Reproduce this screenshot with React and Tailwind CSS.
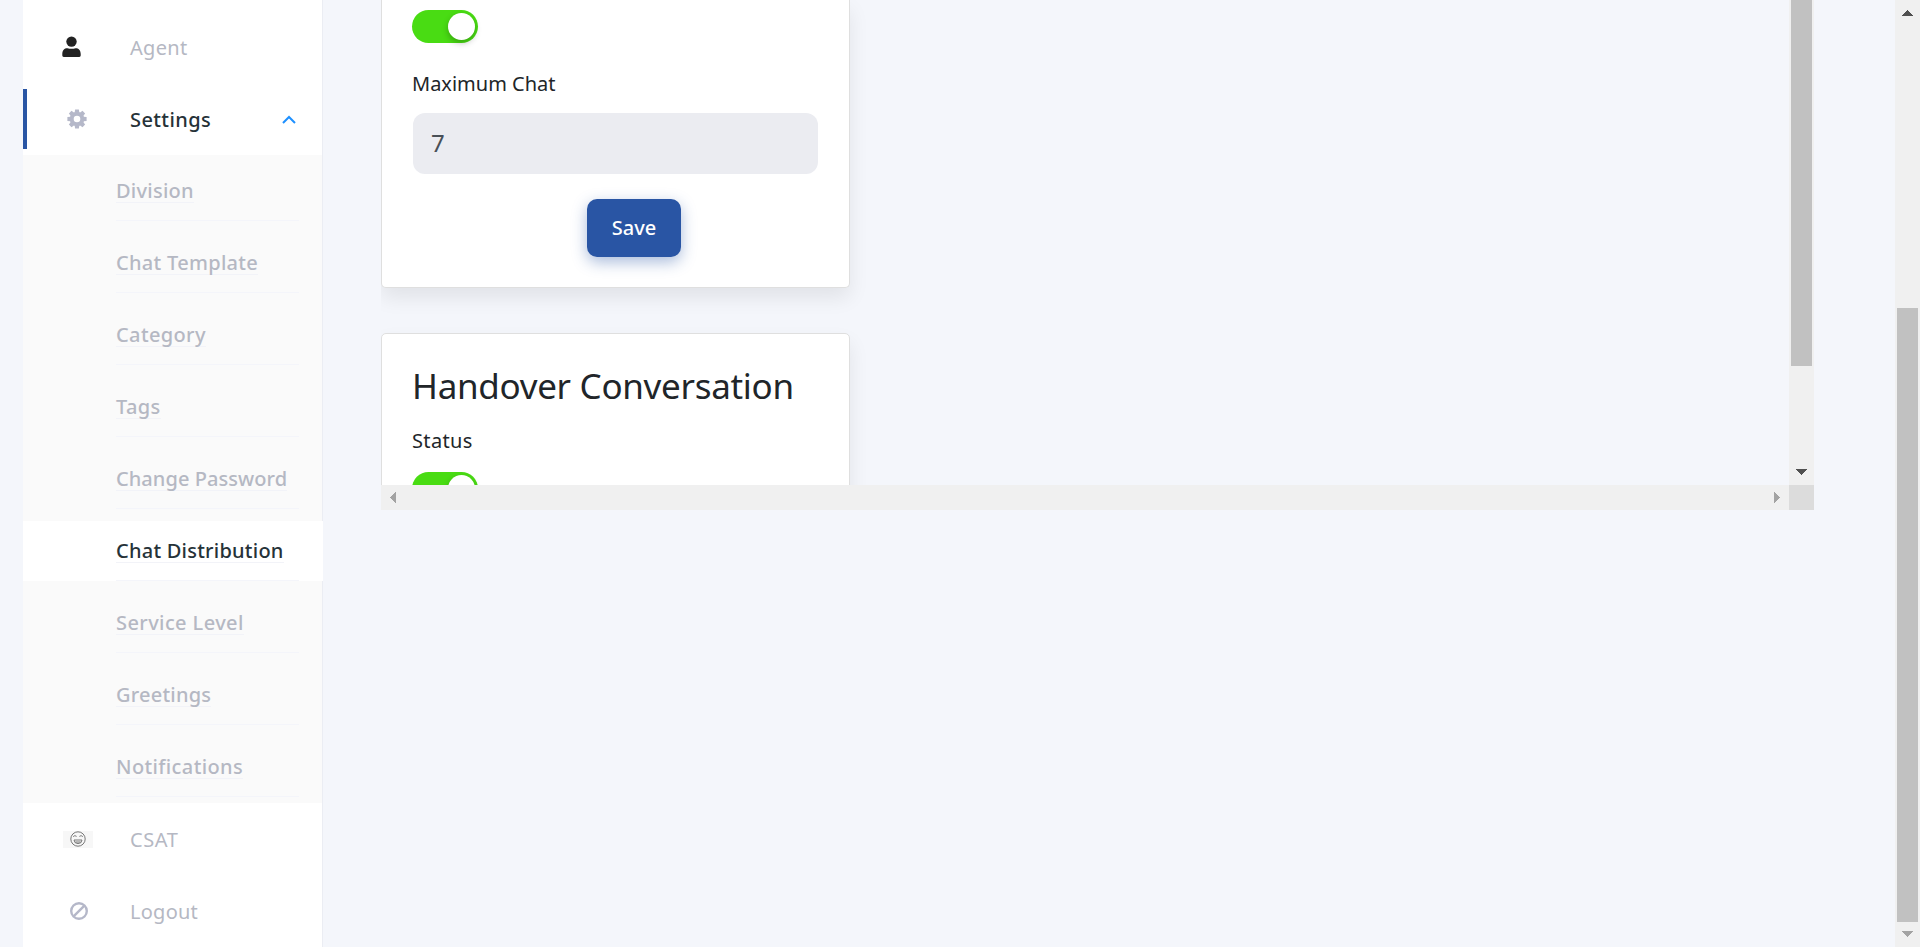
import React from "react";

const subItems = [
  { label: "Division", ls: "tracking-[0.25px]" },
  { label: "Chat Template", ls: "tracking-[0.3px]" },
  { label: "Category", ls: "tracking-[0.37px]" },
  { label: "Tags", ls: "tracking-[0.35px]" },
  { label: "Change Password", ls: "tracking-[0.06px]" },
  { label: "Chat Distribution", ls: "tracking-[0.24px]", active: true },
  { label: "Service Level", ls: "tracking-[0.4px]" },
  { label: "Greetings", ls: "tracking-[0.22px]" },
  { label: "Notifications", ls: "tracking-[0.38px]" },
];

function UserIcon() {
  return (
    <svg width="19" height="22" viewBox="0 0 19 22" fill="#222">
      <circle cx="9.5" cy="5.6" r="5.2" />
      <path d="M0.3 18C0.3 14 2.4 12.2 5.4 12.2Q9.5 13.4 13.6 12.2C16.6 12.2 18.7 14 18.7 18V19.6Q18.7 21 17.3 21H1.7Q0.3 21 0.3 19.6Z" />
    </svg>
  );
}

function GearIcon() {
  const teeth = [0, 45, 90, 135, 180, 225, 270, 315];
  return (
    <svg width="20" height="20" viewBox="-10 -10 20 20" fill="#b5b8c9">
      <circle r="5.3" fill="none" stroke="#b5b8c9" strokeWidth="4" />
      {teeth.map((a) => (
        <path key={a} d="M-2.3-6.4 -1.9-9.6H1.9L2.3-6.4Z" transform={`rotate(${a})`} />
      ))}
    </svg>
  );
}

function BanIcon() {
  return (
    <svg width="18" height="18" viewBox="0 0 18 18" fill="none" stroke="#b5b8c9" strokeWidth="2.4">
      <circle cx="9" cy="9" r="7.8" />
      <path d="M3.6 14.4 14.4 3.6" />
    </svg>
  );
}

function SmileIcon() {
  return (
    <svg width="16" height="16" viewBox="0 0 16 16" fill="none" stroke="#777" strokeWidth="1">
      <circle cx="8" cy="8" r="7.2" />
      <path d="M3.2 5.6Q4.8 3.8 6.6 5.4M9.4 5.4Q11.2 3.8 12.8 5.6" />
      <path d="M4 9H12Q11.8 12.6 8 12.6T4 9ZM5.4 11H10.6" />
    </svg>
  );
}

function Arrow({ dir, color }) {
  const shapes = {
    up: "M0 6 5.5 0 11 6Z",
    down: "M0 0H11L5.5 6Z",
    left: "M6 0V11L0 5.5Z",
    right: "M0 0V11L6 5.5Z",
  };
  const vertical = dir === "up" || dir === "down";
  return (
    <svg width={vertical ? 11 : 6} height={vertical ? 6 : 11} fill={color} shapeRendering="crispEdges">
      <path d={shapes[dir]} />
    </svg>
  );
}

function Toggle() {
  return (
    <div className="flex h-[33px] w-[66px] items-center justify-end rounded-full bg-[#49dc13] pr-[3px]">
      <div className="size-[27px] rounded-full bg-white shadow-[0_3px_6px_rgba(0,0,0,0.25)]" />
    </div>
  );
}

function SideItem({ icon, label, ls }) {
  return (
    <div className="flex h-[72px] items-center text-[20px] text-[#b5b8c3]">
      <div className="flex w-[107px] shrink-0 items-center pl-10">{icon}</div>
      <span className={"pt-px " + ls}>{label}</span>
    </div>
  );
}

function Sidebar() {
  return (
    <aside className="ml-[23px] h-full w-[300px] shrink-0 border-r border-[#ebedf3] bg-white">
      <div className="h-[11px]" />
      <SideItem icon={<div className="-ml-px"><UserIcon /></div>} label="Agent" ls="tracking-[0.3px]" />
      <div className="flex h-[72px] items-center">
        <div className="flex h-[60px] w-full items-center border-l-4 border-[#2955a4]">
          <div className="w-[103px] pl-10"><GearIcon /></div>
          <span className="w-[152px] pt-px text-[20px] font-medium tracking-[0.4px] text-[#263238]">Settings</span>
          <svg width="14" height="9" viewBox="0 0 14 9" fill="none" stroke="#1e90ff" strokeWidth="2">
            <path d="M1 8 7 2 13 8" />
          </svg>
        </div>
      </div>
      <nav className="-mr-px flex flex-col">
        {subItems.map((it) => (
          <div key={it.label} className="border-r border-[#ebedf3] bg-[#fafafa] py-1.5">
            <div className={"-mr-px h-[60px] pl-[93px] pr-6 " + (it.active ? "bg-white" : "")}>
              <div className="flex h-[60px] items-center border-b border-[#f4f5fa]">
                <span
                  className={
                    "mt-px flex h-6 items-center border-b border-[#f2f3f8] text-[20px] font-medium whitespace-nowrap " +
                    it.ls +
                    (it.active ? " text-[#263238]" : " text-[#b5b8c3]")
                  }
                >
                  {it.label}
                </span>
              </div>
            </div>
          </div>
        ))}
      </nav>
      <SideItem
        icon={<div className="flex h-[17px] w-[30px] items-center justify-center bg-[#f7f7f7]"><SmileIcon /></div>}
        label="CSAT"
        ls="tracking-[0.55px]"
      />
      <SideItem icon={<div className="pl-[6.5px]"><BanIcon /></div>} label="Logout" ls="tracking-[0.25px]" />
    </aside>
  );
}

function ScrollArea() {
  return (
    <section className="ml-[58px] flex h-[510px] w-[1433px] flex-col">
      <div className="flex h-[485px]">
        <div className="h-[485px] flex-1 overflow-hidden">
          <div className="h-[288px] w-[469px] rounded-b-[5px] border border-t-0 border-[#dfdfdf] bg-white px-[30px] pt-2.5 shadow-[0_10px_20px_rgba(0,0,0,0.08)]">
            <Toggle />
            <div className="mt-[27px] h-[27px] text-[20px] leading-[27px] text-[#212529]">
              <span className="tracking-[0px]">Maximum Chat</span>
            </div>
            <div className="mx-px mt-4 flex h-[61px] items-center rounded-xl bg-[#ebecf1] pb-px pl-[18px] text-[24px] text-[#495057]">7</div>
            <button className="mt-[25px] ml-[175px] flex h-[58px] w-[94px] items-center justify-center rounded-[10px] bg-[#2955a4] text-[20px] font-medium text-white shadow-[0_5px_15px_rgba(41,85,164,0.4)]">
              Save
            </button>
          </div>
          <div className="mt-[45px] h-[300px] w-[469px] rounded-[5px] border border-[#dfdfdf] bg-white px-[30px] pt-[29px] shadow-[0_10px_20px_rgba(0,0,0,0.08)]">
            <h2 className="h-[46px] text-[35px] leading-[46px] tracking-[-0.3px] whitespace-nowrap text-[#212529]">Handover Conversation</h2>
            <div className="mt-[18px] mb-[18px] h-[27px] text-[20px] leading-[27px] tracking-[0.35px] text-[#212529]">Status</div>
            <Toggle />
          </div>
        </div>
        <div className="flex w-[25px] flex-col items-center justify-between bg-[#f0f0f0] pb-2.5">
          <div className="h-[366px] w-[21px] bg-[#c1c1c1]" />
          <Arrow dir="down" color="#505050" />
        </div>
      </div>
      <div className="flex h-[25px]">
        <div className="flex flex-1 items-center justify-between bg-[#f0f0f0] px-[9px]">
          <Arrow dir="left" color="#a3a3a3" />
          <Arrow dir="right" color="#a3a3a3" />
        </div>
        <div className="w-[25px] bg-[#dcdcdc]" />
      </div>
    </section>
  );
}

export default function App() {
  return (
    <div className="flex h-[947px] w-[1920px] overflow-hidden bg-[#f4f6fb] font-['Noto_Sans',sans-serif]">
      <Sidebar />
      <main className="flex-1">
        <ScrollArea />
      </main>
      <div className="flex w-[25px] flex-col items-center bg-[#f0f0f0] pt-2.5">
        <Arrow dir="up" color="#505050" />
        <div className="mt-[292px] mb-[9px] h-[614px] w-[21px] shrink-0 bg-[#c1c1c1]" />
        <Arrow dir="down" color="#a3a3a3" />
      </div>
    </div>
  );
}
